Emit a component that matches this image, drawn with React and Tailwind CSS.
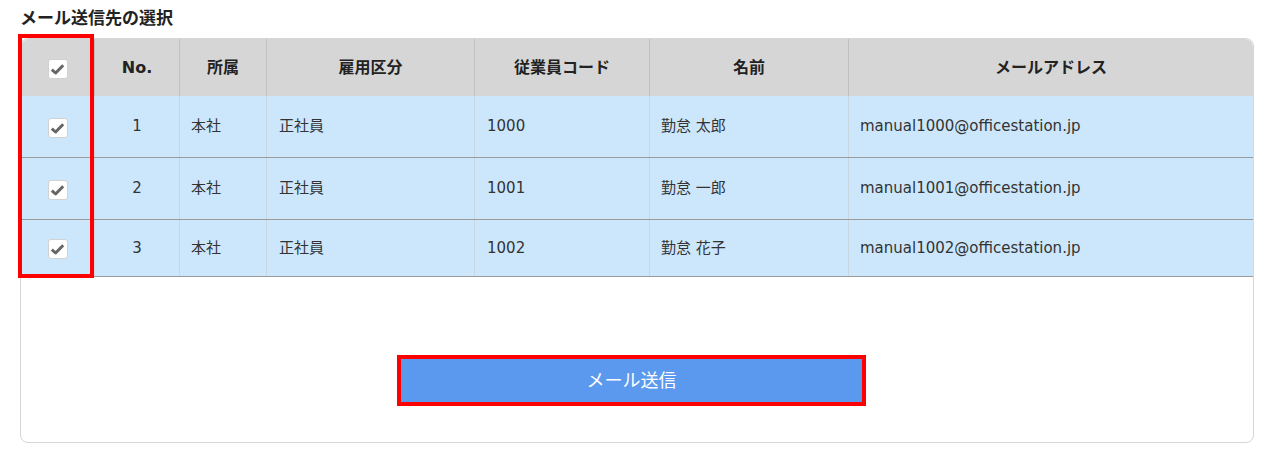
import React from "react";

const rows = [
  { no: 1, dept: "本社", type: "正社員", code: "1000", name: "勤怠 太郎", mail: "manual1000@officestation.jp", h: "h-[62px]" },
  { no: 2, dept: "本社", type: "正社員", code: "1001", name: "勤怠 一郎", mail: "manual1001@officestation.jp", h: "h-[62px]" },
  { no: 3, dept: "本社", type: "正社員", code: "1002", name: "勤怠 花子", mail: "manual1002@officestation.jp", h: "h-[57px]" },
];

const cols = "grid grid-cols-[74px_85px_87px_208px_175px_199px_1fr]";

function Check() {
  return (
    <span className="mt-[2px] w-[20px] h-[20px] rounded-[3px] bg-white border border-[#d2d2d2] flex items-center justify-center">
      <svg width="15" height="12" viewBox="0 0 15 12">
        <path d="M1.8 6.6 L5.6 10 L13.2 2.2" fill="none" stroke="#666" strokeWidth="3" strokeLinejoin="round" />
      </svg>
    </span>
  );
}

export default function App() {
  const font = { fontFamily: '"DejaVu Sans", "Noto Sans CJK JP", sans-serif' };
  return (
    <div className="w-[1276px] h-[458px] bg-white text-[#333]" style={font}>
      <div className="pl-5 pt-[6px] h-[38px] text-[17px] font-bold text-[#222] leading-[24px]">メール送信先の選択</div>

      <div className="relative ml-5 w-[1234px] h-[405px] border border-[#d6d6d6] rounded-lg">
        <div className="overflow-hidden rounded-t-lg">
          {/* header */}
          <div className={`${cols} h-[57px] bg-[#d6d6d6] text-[16px] font-bold text-[#222]`}>
            <div className="flex items-center justify-center border-r border-[#c0c0c0]"><Check /></div>
            <div className="flex items-center justify-center border-r border-[#c0c0c0]">No.</div>
            <div className="flex items-center justify-center border-r border-[#c0c0c0]">所属</div>
            <div className="flex items-center justify-center border-r border-[#c0c0c0]">雇用区分</div>
            <div className="flex items-center justify-center border-r border-[#c0c0c0]">従業員コード</div>
            <div className="flex items-center justify-center border-r border-[#c0c0c0]">名前</div>
            <div className="flex items-center justify-center">メールアドレス</div>
          </div>

          {/* rows */}
          {rows.map((r) => (
            <div key={r.no} className={`${cols} ${r.h} bg-[#cce7fc] border-b border-[#9a9a9a] text-[15px] text-[#333]`}>
              <div className="flex items-center justify-center border-r border-[#c8d6e2]"><Check /></div>
              <div className="flex items-center justify-center border-r border-[#c8d6e2]">{r.no}</div>
              <div className="flex items-center pl-[11px] border-r border-[#c8d6e2]">{r.dept}</div>
              <div className="flex items-center pl-[12px] border-r border-[#c8d6e2]">{r.type}</div>
              <div className="flex items-center pl-[12px] border-r border-[#c8d6e2]">{r.code}</div>
              <div className="flex items-center pl-[11px] border-r border-[#c8d6e2]">{r.name}</div>
              <div className="flex items-center pl-[11px]">{r.mail}</div>
            </div>
          ))}
        </div>

        {/* send button */}
        <div className="pt-[82px]">
          <button className="ml-[380px] w-[461px] h-[43px] bg-[#5b99ee] text-white text-[18px] outline-4 outline-[#ff0000]">
            メール送信
          </button>
        </div>

        {/* highlight over checkbox column */}
        <div className="absolute left-[-3px] top-[-5px] w-[76px] h-[244px] border-4 border-[#ff0000] pointer-events-none" />
      </div>
    </div>
  );
}
